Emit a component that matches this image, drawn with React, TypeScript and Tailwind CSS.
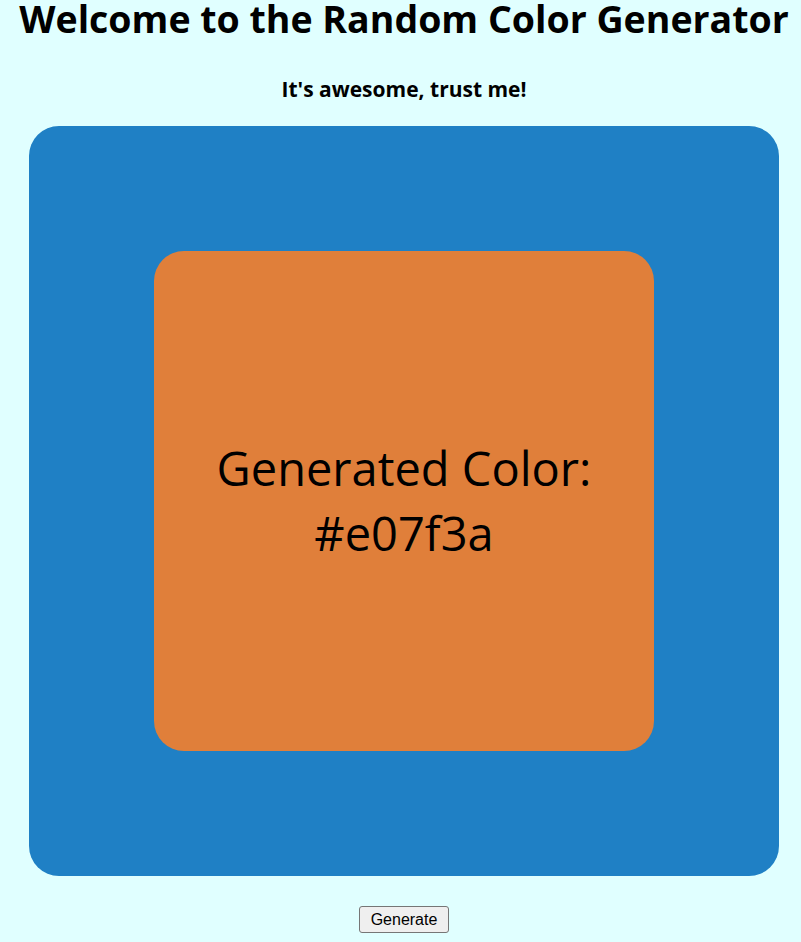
import React from "react";

export default function App() {
  return (
    <div
      className="min-h-[942px] w-full bg-[#e0ffff] pl-2 pr-[1px] text-black"
      style={{ fontFamily: '"Open Sans", "Noto Sans", sans-serif' }}
    >
      <h1 className="m-0 text-center text-[37.5px] font-bold leading-[37px] whitespace-nowrap">
        Welcome to the Random Color Generator
      </h1>
      <h3 className="mt-[38px] text-center text-[21px] font-bold leading-[28px]">
        It's awesome, trust me!
      </h3>
      <div className="mt-[23px] flex justify-center">
        <div className="flex h-[750px] w-[750px] items-center justify-center rounded-[30px] bg-[#1f80c5]">
          <div className="flex h-[500px] w-[500px] items-center justify-center rounded-[30px] bg-[#e07f3a] text-center">
            <p className="text-[47px] font-normal leading-[65px]">
              Generated Color:
              <br />
              #e07f3a
            </p>
          </div>
        </div>
      </div>
      <div className="mt-[30px] flex justify-center">
        <button
          className="h-[27px] w-[90px] rounded-[3px] border border-[#767676] bg-[#efefef] text-[16px] leading-[18px] text-black"
          style={{ fontFamily: '"Liberation Sans", Arial, sans-serif' }}
        >
          Generate
        </button>
      </div>
    </div>
  );
}
